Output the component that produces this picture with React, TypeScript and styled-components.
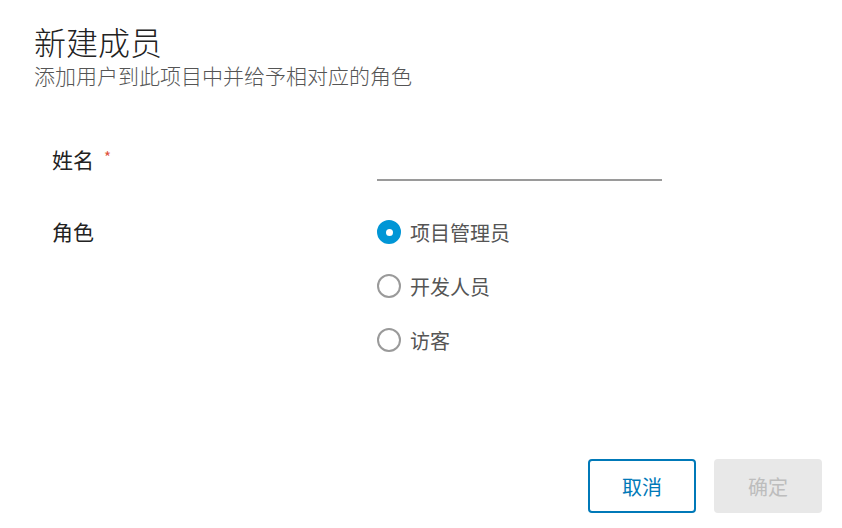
import React, { useState } from "react";
import styled, { createGlobalStyle } from "styled-components";

const GlobalStyle = createGlobalStyle`
  html, body { margin: 0; padding: 0; background: #ffffff; }
  body { font-family: "Noto Sans CJK SC", "Noto Sans", sans-serif; }
  * { box-sizing: border-box; }
`;

const Dialog = styled.div`
  width: 842px;
  height: 528px;
  display: flex;
  flex-direction: column;
  padding: 22px 20px 15px 34px;
  background: #ffffff;
`;

const Title = styled.h1`
  margin: 0;
  font-size: 32px;
  line-height: 38px;
  font-weight: 300;
  color: #222222;
`;

const Subtitle = styled.p`
  margin: 1px 0 0;
  font-size: 21px;
  line-height: 28px;
  font-weight: 300;
  color: #555555;
`;

const Form = styled.div`
  margin-top: 56px;
  margin-left: 18px;
  display: grid;
  grid-template-columns: 325px 1fr;
  align-items: start;
  row-gap: 24px;
`;

const Label = styled.div<{ $lh: number; $offset: number }>`
  font-size: 21px;
  line-height: ${(p) => p.$lh}px;
  color: #222222;
  display: flex;
  align-items: center;
  margin-top: ${(p) => p.$offset}px;
`;

const Required = styled.span`
  color: #e0533d;
  font-size: 15px;
  margin-left: 10px;
  position: relative;
  top: -2px;
`;

const TextInput = styled.input`
  display: block;
  width: 285px;
  height: 36px;
  margin: 0;
  border: none;
  border-bottom: 2px solid #9a9a9a;
  outline: none;
  font-family: inherit;
  font-size: 20px;
  color: #222;
  padding: 0 2px;
  background: transparent;
`;

const RadioGroup = styled.div`
  display: flex;
  flex-direction: column;
`;

const RadioRow = styled.label`
  height: 54px;
  display: flex;
  align-items: center;
  cursor: pointer;
`;

const RadioCircle = styled.span<{ $checked: boolean }>`
  width: 24px;
  height: 24px;
  border-radius: 50%;
  flex: none;
  display: flex;
  align-items: center;
  justify-content: center;
  border: 2px solid ${(p) => (p.$checked ? "#0096d6" : "#9a9a9a")};
  background: ${(p) => (p.$checked ? "#0096d6" : "#ffffff")};
  &::after {
    content: "";
    width: 7px;
    height: 7px;
    border-radius: 50%;
    background: #ffffff;
    display: ${(p) => (p.$checked ? "block" : "none")};
  }
`;

const RadioText = styled.span`
  margin-left: 9px;
  font-size: 20px;
  color: #555555;
`;

const Footer = styled.div`
  margin-top: auto;
  display: flex;
  justify-content: flex-end;
  gap: 18px;
`;

const Button = styled.button<{ $variant: "outline" | "disabled" }>`
  width: 108px;
  height: 54px;
  border-radius: 4px;
  font-family: inherit;
  font-size: 20px;
  border: ${(p) => (p.$variant === "outline" ? "2px solid #0079b8" : "none")};
  color: ${(p) => (p.$variant === "outline" ? "#0079b8" : "#bdbdbd")};
  background: ${(p) => (p.$variant === "outline" ? "#ffffff" : "#e8e8e8")};
  cursor: ${(p) => (p.$variant === "outline" ? "pointer" : "default")};
`;

const roles = ["项目管理员", "开发人员", "访客"];

export default function App() {
  const [role, setRole] = useState(0);
  const [name, setName] = useState("");
  return (
    <>
      <GlobalStyle />
      <Dialog>
        <Title>新建成员</Title>
        <Subtitle>添加用户到此项目中并给予相对应的角色</Subtitle>
        <Form>
          <Label $lh={28} $offset={0}>
            姓名<Required>*</Required>
          </Label>
          <TextInput value={name} onChange={(e) => setName(e.target.value)} />
          <Label $lh={54} $offset={-1}>角色</Label>
          <RadioGroup>
            {roles.map((r, i) => (
              <RadioRow key={r} onClick={() => setRole(i)}>
                <RadioCircle $checked={role === i} />
                <RadioText>{r}</RadioText>
              </RadioRow>
            ))}
          </RadioGroup>
        </Form>
        <Footer>
          <Button $variant="outline">取消</Button>
          <Button $variant="disabled" disabled>
            确定
          </Button>
        </Footer>
      </Dialog>
    </>
  );
}
